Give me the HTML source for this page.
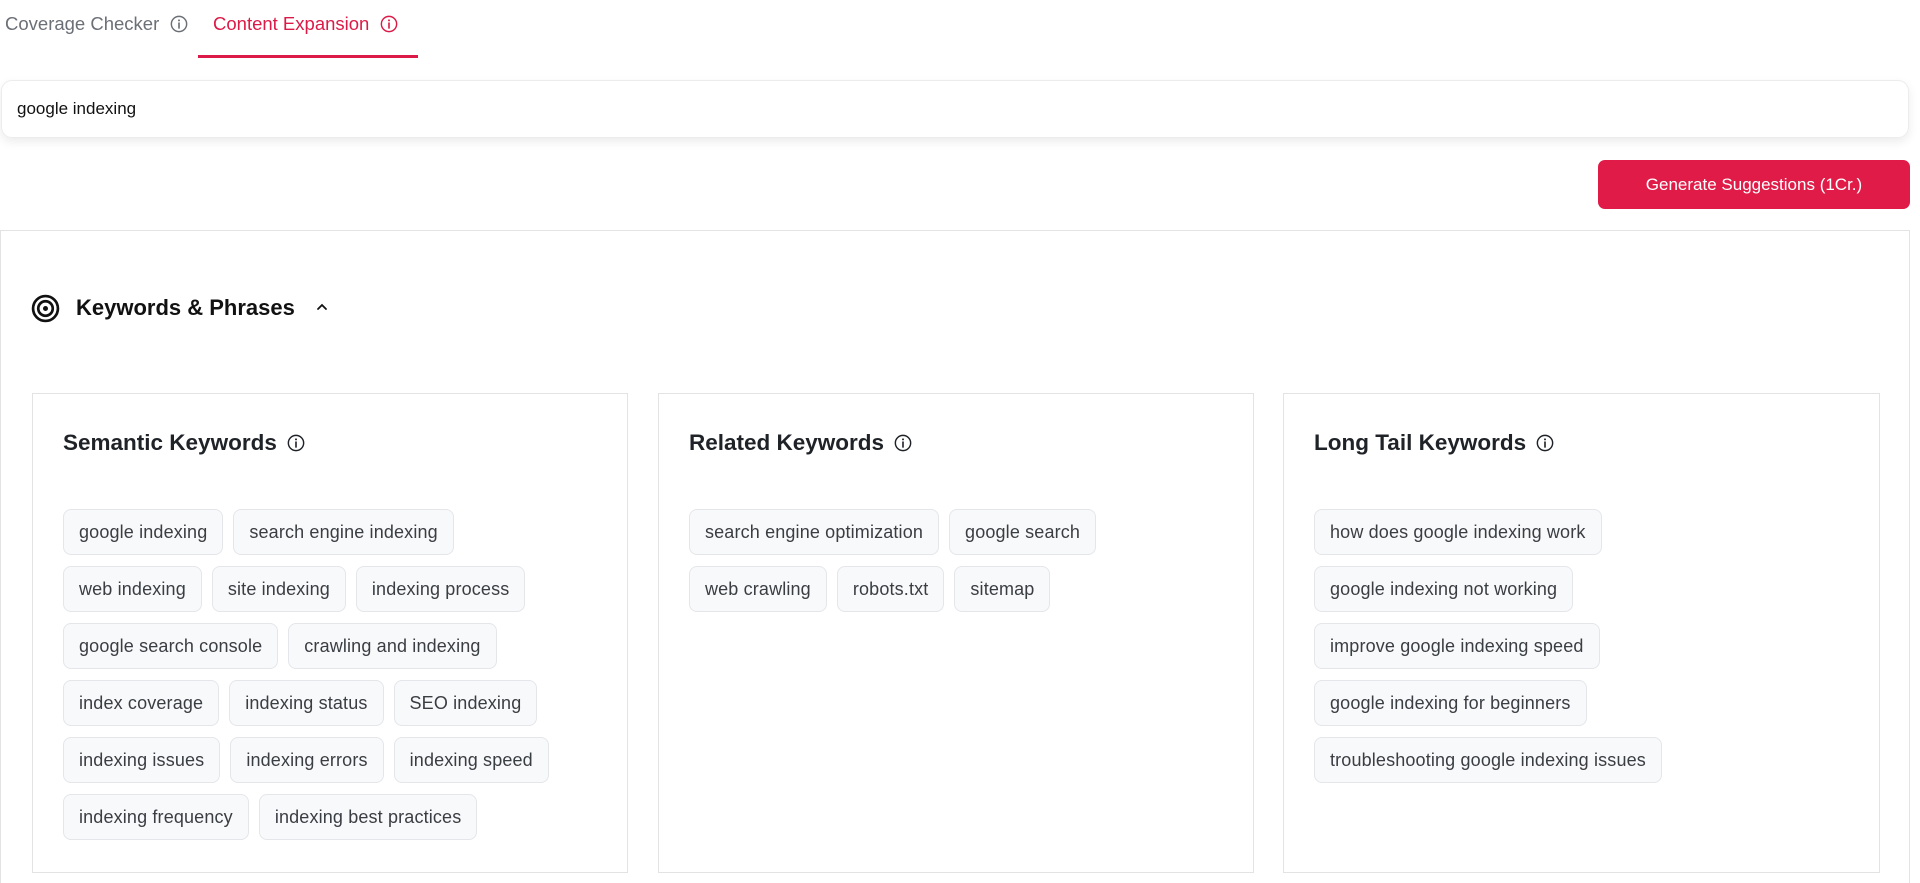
<!DOCTYPE html>
<html style="overflow:hidden;height:883px"><head><meta charset="utf-8"><style>
*{box-sizing:border-box;margin:0;padding:0}
body{width:1920px;height:883px;overflow:hidden;background:#fff;font-family:"Liberation Sans",sans-serif;color:#1f2328;position:relative}
.abs{position:absolute}
.tab{position:absolute;top:13px;font-size:18.5px;display:flex;align-items:center;gap:11px}
.info{width:18px;height:18px}
.chip{display:inline-block;height:46px;line-height:44px;padding:0 15px;border:1px solid #e4e6ea;background:#f8f9fa;border-radius:8px;font-size:18px;letter-spacing:0.15px;color:#3a3d42;margin-right:10px;white-space:nowrap}
.row{height:57px;white-space:nowrap}
.card{position:absolute;top:393px;height:480px;border:1.5px solid #e3e3e3;background:#fff}
.ct{position:absolute;left:30px;top:36px;font-size:22.5px;font-weight:bold;display:flex;align-items:center;gap:10px;color:#1f2328}
.chips{position:absolute;left:30px;top:115px}
</style></head><body>
<svg width="0" height="0" style="position:absolute"><defs><symbol id="i" viewBox="0 0 20 20"><circle cx="10" cy="10" r="8.5" fill="none" stroke="currentColor" stroke-width="1.6"/><line x1="10" y1="9" x2="10" y2="14.5" stroke="currentColor" stroke-width="1.8" stroke-linecap="round"/><circle cx="10" cy="6" r="1.1" fill="currentColor"/></symbol></defs></svg>

<div class="tab" style="left:5px;color:#6b6f76">Coverage Checker <svg class="info"><use href="#i"/></svg></div>
<div class="tab" style="left:213px;color:#dc1a48">Content Expansion <svg class="info"><use href="#i"/></svg></div>
<div class="abs" style="left:198px;top:55px;width:220px;height:3px;background:#dc1a48"></div>

<div class="abs" style="left:1px;top:80px;width:1908px;height:58px;border:1px solid #ececec;border-radius:11px;box-shadow:0 4px 10px rgba(0,0,0,0.08);font-size:17px;line-height:56px;padding-left:15px;color:#111">google indexing</div>

<div class="abs" style="left:1598px;top:160px;width:312px;height:49px;background:#e01b47;border-radius:7px;color:#fff;font-size:17px;text-align:center;line-height:49px">Generate Suggestions (1Cr.)</div>

<div class="abs" style="left:0;top:230px;width:1910px;height:653px;border:1.5px solid #e3e3e3;border-bottom:none"></div>

<svg class="abs" style="left:31px;top:294px" width="29" height="29" viewBox="0 0 28 28"><circle cx="14" cy="14" r="12" fill="none" stroke="#111" stroke-width="2.6"/><circle cx="14" cy="14" r="7" fill="none" stroke="#111" stroke-width="2.6"/><circle cx="14" cy="14" r="2.4" fill="#111"/></svg>
<div class="abs" style="left:76px;top:295px;font-size:22px;font-weight:bold;color:#111">Keywords &amp; Phrases</div>
<svg class="abs" style="left:315px;top:302px" width="14" height="10" viewBox="0 0 14 10"><path d="M3 7 L7 3 L11 7" fill="none" stroke="#111" stroke-width="1.8" stroke-linecap="round"/></svg>

<div class="card" style="left:32px;width:596px">
<div class="ct">Semantic Keywords <svg class="info"><use href="#i"/></svg></div>
<div class="chips">
<div class="row"><span class="chip">google indexing</span><span class="chip">search engine indexing</span></div>
<div class="row"><span class="chip">web indexing</span><span class="chip">site indexing</span><span class="chip">indexing process</span></div>
<div class="row"><span class="chip">google search console</span><span class="chip">crawling and indexing</span></div>
<div class="row"><span class="chip">index coverage</span><span class="chip">indexing status</span><span class="chip">SEO indexing</span></div>
<div class="row"><span class="chip">indexing issues</span><span class="chip">indexing errors</span><span class="chip">indexing speed</span></div>
<div class="row"><span class="chip">indexing frequency</span><span class="chip">indexing best practices</span></div>
</div></div>

<div class="card" style="left:658px;width:596px">
<div class="ct">Related Keywords <svg class="info"><use href="#i"/></svg></div>
<div class="chips">
<div class="row"><span class="chip">search engine optimization</span><span class="chip">google search</span></div>
<div class="row"><span class="chip">web crawling</span><span class="chip">robots.txt</span><span class="chip">sitemap</span></div>
</div></div>

<div class="card" style="left:1283px;width:597px">
<div class="ct">Long Tail Keywords <svg class="info"><use href="#i"/></svg></div>
<div class="chips">
<div class="row"><span class="chip">how does google indexing work</span></div>
<div class="row"><span class="chip">google indexing not working</span></div>
<div class="row"><span class="chip">improve google indexing speed</span></div>
<div class="row"><span class="chip">google indexing for beginners</span></div>
<div class="row"><span class="chip">troubleshooting google indexing issues</span></div>
</div></div>
</body></html>
